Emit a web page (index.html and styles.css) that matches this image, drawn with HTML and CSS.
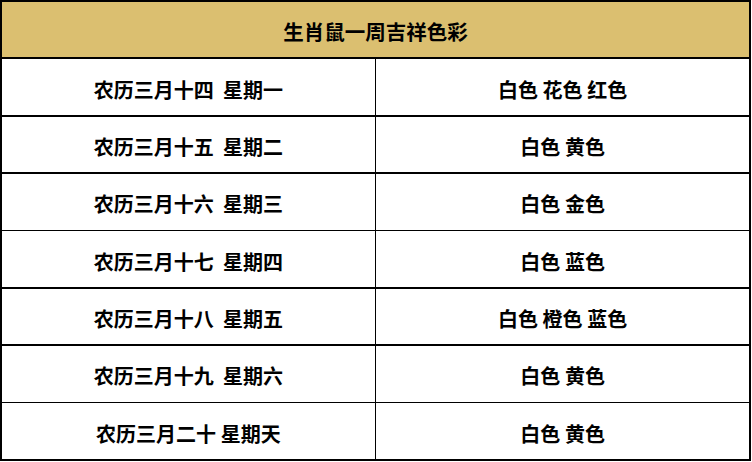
FILE: index.html
```html
<!DOCTYPE html>
<html lang="zh">
<head>
<meta charset="utf-8">
<link rel="stylesheet" href="styles.css">
</head>
<body>
<div class="colors">
  <div class="cell title">生肖鼠一周吉祥色彩</div>
  <div class="cell">农历三月十四&nbsp;&nbsp;星期一</div><div class="cell">白色 花色 红色</div>
  <div class="cell">农历三月十五&nbsp;&nbsp;星期二</div><div class="cell">白色 黄色</div>
  <div class="cell">农历三月十六&nbsp;&nbsp;星期三</div><div class="cell">白色 金色</div>
  <div class="cell">农历三月十七&nbsp;&nbsp;星期四</div><div class="cell">白色 蓝色</div>
  <div class="cell">农历三月十八&nbsp;&nbsp;星期五</div><div class="cell">白色 橙色 蓝色</div>
  <div class="cell">农历三月十九&nbsp;&nbsp;星期六</div><div class="cell">白色 黄色</div>
  <div class="cell">农历三月二十 星期天</div><div class="cell">白色 黄色</div>
</div>
</body>
</html>
```
FILE: styles.css
```css
html, body {
  margin: 0;
  padding: 0;
  background: #ffffff;
}
.colors {
  box-sizing: border-box;
  width: 751px;
  height: 461px;
  padding: 2px;
  background: #000;
  display: grid;
  grid-template-columns: 1fr 1fr;
  grid-template-rows: repeat(8, 1fr);
  gap: 1.5px;
  font-family: "Noto Sans CJK SC", "Noto Sans", sans-serif;
  font-weight: bold;
  font-size: 20px;
  color: #000;
}
.cell {
  background: #fff;
  display: flex;
  align-items: center;
  justify-content: center;
  line-height: 1;
  padding-top: 5px;
}
.title {
  grid-column: 1 / 3;
  background: #dbbf70;
  font-size: 20.5px;
  margin-bottom: 0.5px;
  padding-top: 4px;
}
```
